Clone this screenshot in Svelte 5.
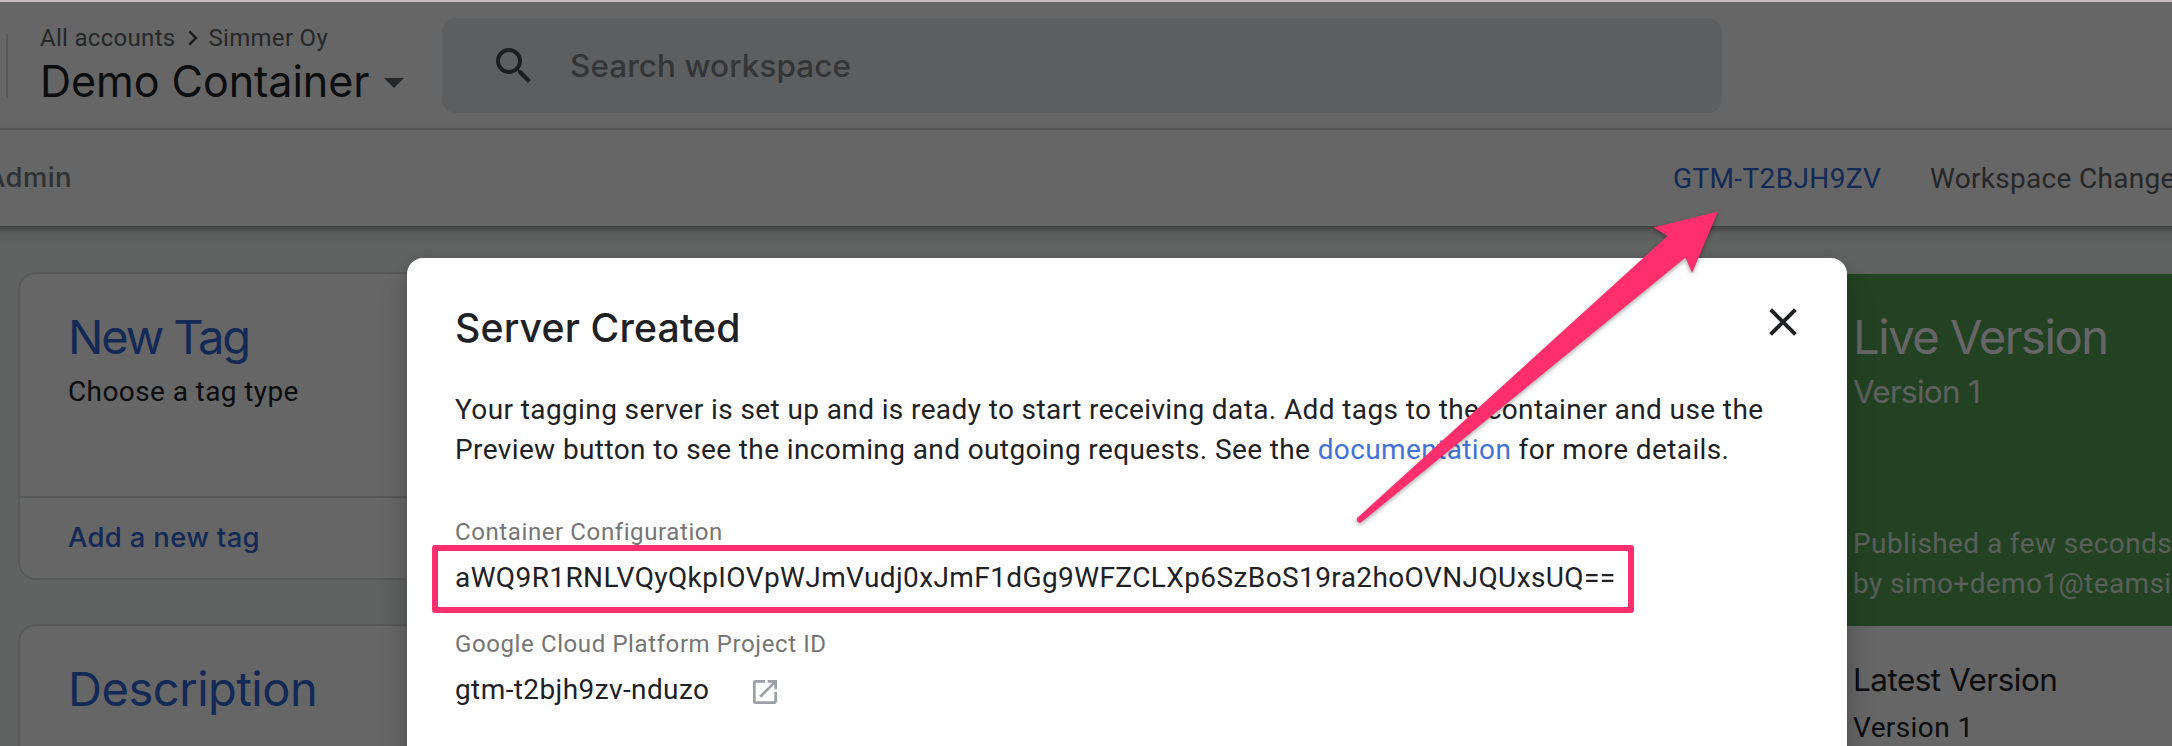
<script>
  const crumbs = ['All accounts', 'Simmer Oy'];
  const cards = [
    { title: 'New Tag', text: 'Choose a tag type', action: 'Add a new tag' },
    { title: 'Description', text: '', action: '' }
  ];
  const config = 'aWQ9R1RNLVQyQkpIOVpWJmVudj0xJmF1dGg9WFZCLXp6SzBoS19ra2hoOVNJQUxsUQ==';
</script>

<div class="page">
  <div class="strip"></div>
  <div class="app">
    <header>
      <div class="divider"></div>
      <div class="brand">
        <div class="crumbs">
          <span>{crumbs[0]}</span>
          <svg width="10" height="16" viewBox="0 0 10 16"><path d="M1.3 1.3 8 8l-6.700 6.700" fill="none" stroke="#4a4d51" stroke-width="2.600" /></svg>
          <span>{crumbs[1]}</span>
        </div>
        <div class="container-name">
          <span>Demo Container</span>
          <svg width="20" height="10" viewBox="0 0 20 10"><path d="M0 0h20L10 10z" fill="#5f6368" /></svg>
        </div>
      </div>
      <div class="search">
        <svg width="48" height="48" viewBox="0 0 24 24"><path fill="#4a4d51" d="M15.500 14h-.79l-.28-.27A6.471 6.471 0 0 0 16 9.500 6.500 6.500 0 1 0 9.500 16c1.610 0 3.090-.59 4.230-1.570l.27.28v.79l5 4.990L20.490 19l-4.990-5zm-6 0C7.010 14 5 11.990 5 9.500S7.010 5 9.500 5 14 7.010 14 9.500 11.990 14 9.500 14z" /></svg>
        <span>Search workspace</span>
      </div>
    </header>

    <nav>
      <span class="tab">Admin</span>
      <div class="nav-right">
        <span class="container-id">GTM-T2BJH9ZV</span>
        <span class="changes">Workspace Changes</span>
      </div>
    </nav>

    <main>
      <div class="column">
        {#each cards as card}
          <section class="card">
            <div class="card-body">
              <h2>{card.title}</h2>
              {#if card.text}<p>{card.text}</p>{/if}
            </div>
            {#if card.action}<div class="card-action">{card.action}</div>{/if}
          </section>
        {/each}
      </div>
      <div class="column"></div>
      <div class="column">
        <section class="live">
          <h2>Live Version</h2>
          <h3>Version 1</h3>
          <p>Published a few seconds ago<br />by simo+demo1@teamsimmer.com</p>
        </section>
        <section class="latest">
          <h3>Latest Version</h3>
          <p>Version 1</p>
        </section>
      </div>
    </main>
    <div class="scrim"></div>
  </div>

  <div class="modal">
    <div class="modal-head">
      <h1>Server Created</h1>
      <svg width="28" height="28" viewBox="0 0 28 28"><path d="M1.600 1.600l24.800 24.800M26.400 1.600L1.600 26.400" stroke="#202124" stroke-width="4" /></svg>
    </div>
    <p class="intro">
      Your tagging server is set up and is ready to start receiving data. Add tags to the container and use the<br />
      Preview button to see the incoming and outgoing requests. See the <a href="#docs">documentation</a> for more details.
    </p>
    <div class="label">Container Configuration</div>
    <div class="value">{config}<span class="highlight"></span></div>
    <div class="label second">Google Cloud Platform Project ID</div>
    <div class="value">
      <span>gtm-t2bjh9zv-nduzo</span>
      <svg width="32" height="32" viewBox="0 0 24 24"><path fill="#9aa0a6" d="M19 19H5V5h7V3H5a2 2 0 0 0-2 2v14a2 2 0 0 0 2 2h14c1.100 0 2-.9 2-2v-7h-2v7zM14 3v2h3.590l-9.830 9.830 1.410 1.410L19 6.410V10h2V3h-7z" /></svg>
    </div>
  </div>

  <svg class="arrow" width="380" height="330" viewBox="0 0 380 330">
    <path d="M378 11.500 313.500 27.500 327.500 36 17.200 318Q16 320.500 18 322.300 20 323.300 21.800 321.800L345.500 57.500 352 73Z" fill="#ff2e6c" />
  </svg>
</div>

<style>
  :global(body) { background: #616161; }
  .page {
    position: relative;
    width: 2172px;
    height: 746px;
    overflow: hidden;
    font-family: Roboto, sans-serif;
    font-size: 28px;
    line-height: 40px;
    letter-spacing: 0.4px;
    color: #202124;
  }
  h1, h2, h3, p { margin: 0; font-weight: 400; }
  svg { display: block; flex: none; }
  .strip { height: 2px; background: #ccb8c0; }
  .app { position: relative; height: 744px; background: #f1f3f3; overflow: hidden; }
  .scrim { position: absolute; inset: 0; background: rgba(0, 0, 0, 0.6); }

  header {
    display: flex;
    align-items: flex-start;
    height: 126px;
    padding-left: 6px;
    background: #fff;
    border-bottom: 2px solid #dadce0;
  }
  .divider { width: 2px; height: 64px; margin: 32px 32px 0 0; background: #dadce0; }
  .brand { width: 402px; padding-top: 22px; }
  .crumbs {
    display: flex;
    align-items: center;
    font-size: 24px;
    line-height: 28px;
    letter-spacing: 0.3px;
    color: #5f6368;
  }
  .crumbs svg { margin: 0 10px 0 13px; }
  .container-name {
    display: flex;
    align-items: center;
    gap: 15px;
    margin-top: 3px;
    font: 400 43.1px/52px Inter, sans-serif;
    letter-spacing: -0.08px;
  }
  .container-name svg { margin-top: 3px; }
  .search {
    display: flex;
    align-items: center;
    gap: 32px;
    width: 1280px;
    height: 95px;
    box-sizing: border-box;
    margin-top: 16px;
    padding-left: 48px;
    border-radius: 14px;
    background: #e9ebef;
    font: 500 31.4px/40px Inter, sans-serif;
    letter-spacing: 0.1px;
    color: #80868b;
  }

  nav {
    position: relative;
    display: flex;
    align-items: center;
    justify-content: space-between;
    height: 96px;
    margin: 0 -20px;
    padding: 0 20px;
    background: #fff;
    box-shadow: 0 3px 5px rgba(0, 0, 0, 0.3), 0 4px 14px rgba(0, 0, 0, 0.14);
  }
  .tab {
    margin-left: -14px;
    padding-bottom: 2px;
    font: 500 27.4px/38px Inter, sans-serif;
    letter-spacing: 0.4px;
    color: #757a7f;
  }
  .nav-right { display: flex; width: 499px; padding-top: 1px; white-space: nowrap; }
  .container-id { flex: none; width: 257px; letter-spacing: 0.38px; color: #3367d6; }
  .changes { letter-spacing: 0.3px; color: #5f6368; }

  main {
    display: grid;
    grid-template-columns: repeat(3, 849px);
    gap: 44px;
    padding: 46px 0 0 18px;
  }
  .card {
    margin-bottom: 44px;
    border: 2px solid #dadce0;
    border-radius: 18px;
    background: #fff;
  }
  .card-body { height: 222px; box-sizing: border-box; padding: 35px 48px 0; }
  h2 { font: 400 47px/56px Inter, sans-serif; letter-spacing: -0.45px; color: #3367d6; }
  .card:first-child h2 { letter-spacing: -2.1px; }
  .card p { margin-top: 7px; }
  .card-action {
    height: 80px;
    padding-left: 48px;
    border-top: 2px solid #dadce0;
    font: 500 27.4px/78px Inter, sans-serif;
    letter-spacing: 0.35px;
    color: #3367d6;
  }
  .live {
    display: flex;
    flex-direction: column;
    height: 352px;
    box-sizing: border-box;
    margin-top: 2px;
    padding: 35px 0 22px 49px;
    background: #58a558;
    color: #fff;
    white-space: nowrap;
  }
  .live h2 { color: #fff; letter-spacing: -1.4px; }
  h3 { font: 400 31.4px/40px Inter, sans-serif; letter-spacing: -0.48px; }
  .live h3 { margin-top: 7px; letter-spacing: -0.7px; color: rgba(255, 255, 255, 0.88); }
  .live p { margin-top: auto; color: rgba(255, 255, 255, 0.82); }
  .latest { height: 200px; padding: 34px 0 0 49px; background: #fff; }
  .latest p { margin-top: 8px; letter-spacing: 0.4px; }

  .modal {
    position: absolute;
    left: 407px;
    top: 258px;
    width: 1440px;
    height: 620px;
    box-sizing: border-box;
    padding: 46px 50px 0 48px;
    border-radius: 16px;
    background: #fff;
    box-shadow: 0 24px 30px 2px rgba(0, 0, 0, 0.12), 0 8px 16px 2px rgba(0, 0, 0, 0.12);
  }
  .modal-head { display: flex; justify-content: space-between; }
  .modal-head svg { margin-top: 4px; }
  h1 { font: 500 39.2px/48px Inter, sans-serif; letter-spacing: 0.15px; }
  .intro { margin-top: 38px; letter-spacing: 0.39px; white-space: nowrap; }
  a { color: #4272d8; text-decoration: none; }
  .label {
    margin: 48px 0 12px;
    font-size: 24px;
    line-height: 28px;
    letter-spacing: 0.6px;
    color: #757575;
  }
  .label.second { margin-top: 32px; }
  .value { position: relative; display: flex; align-items: center; gap: 40px; height: 40px; }
  .value svg { margin-top: 4px; }
  .highlight {
    position: absolute;
    left: -23px;
    top: -13px;
    width: 1202px;
    height: 68px;
    box-sizing: border-box;
    border: 6px solid #ff2e6c;
    border-radius: 3px;
  }
  .arrow {
    position: absolute;
    left: 1340px;
    top: 200px;
    filter: drop-shadow(0 2px 2px rgba(0, 0, 0, 0.35));
  }
</style>
